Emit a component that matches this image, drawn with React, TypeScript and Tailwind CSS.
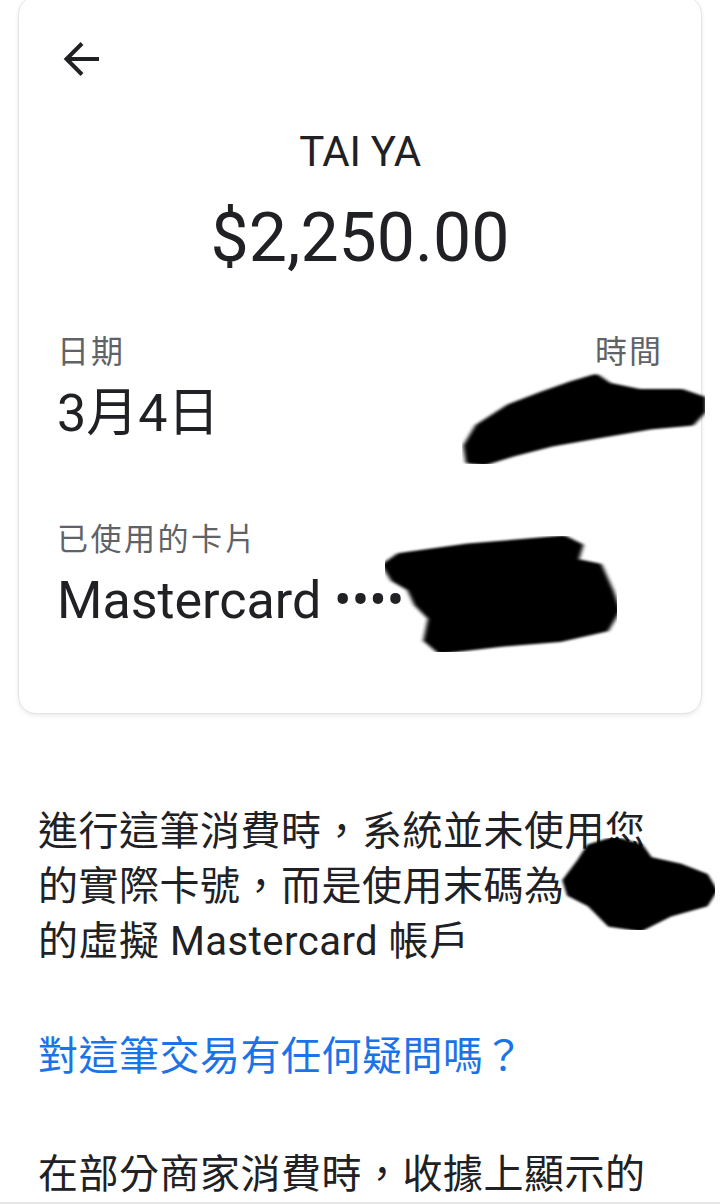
const font = { fontFamily: "Roboto, 'Noto Sans CJK TC', sans-serif" }

function BackArrow() {
  return (
    <svg width="40" height="36" viewBox="0 0 40 36" fill="none" stroke="#202124" strokeWidth="4">
      <path d="M4 17 H37" />
      <path d="M20 1.5 L4.5 17 L20 32.5" strokeLinejoin="miter" />
    </svg>
  )
}

// black scribbles that hide private numbers
function Redaction({ className, points }: { className: string; points: string }) {
  return (
    <svg className={className} viewBox="0 0 100 100" preserveAspectRatio="none">
      <defs>
        <filter id="soft" x="-10%" y="-10%" width="120%" height="120%">
          <feGaussianBlur stdDeviation="0.9" />
        </filter>
      </defs>
      <polygon points={points} fill="#000" stroke="#000" strokeWidth="3" strokeLinejoin="round" filter="url(#soft)" />
    </svg>
  )
}

export default function App() {
  return (
    <div className="relative w-[720px] h-[1204px] overflow-hidden bg-white text-[#202124]" style={font}>
      {/* Transaction card */}
      <div className="mx-[18px] -mt-[4px] rounded-[18px] border border-[#e4e4e4] bg-white shadow-[0_2px_4px_rgba(0,0,0,0.08)] px-[38px] pt-[45px] pb-[82px]">
        <button className="block h-[36px] ml-[5px]">
          <BackArrow />
        </button>

        <div className="mt-[50px] text-center text-[42px] leading-[48px] tracking-[-0.3px]">TAI YA</div>
        <div className="mt-[24px] text-center text-[68px] leading-[76px]">$2,250.00</div>

        <div className="mt-[56px] flex justify-between text-[32px] leading-[40px] tracking-[2px] text-[#5f6368]">
          <span>日期</span>
          <span>時間</span>
        </div>
        <div className="mt-[12px] text-[52px] leading-[60px]">3月4日</div>

        <div className="mt-[76px] text-[31px] leading-[40px] tracking-[2.5px] text-[#5f6368]">已使用的卡片</div>
        <div className="mt-[11px] text-[52px] leading-[60px]">Mastercard ••••</div>
      </div>

      {/* Explanation text */}
      <div className="px-[38px] pt-[90px]">
        <p className="text-[40px] leading-[55px] tracking-[0.5px]">
          進行這筆消費時，系統並未使用您的實際卡號，而是使用末碼為 0000 的虛擬 Mastercard 帳戶
        </p>
        <p className="mt-[60px] text-[40px] leading-[55px] tracking-[0.5px] text-[#1a73e8]">對這筆交易有任何疑問嗎？</p>
        <p className="mt-[63px] text-[40px] leading-[55px] tracking-[0.5px]">在部分商家消費時，收據上顯示的</p>
      </div>

      <Redaction
        className="absolute left-[462px] top-[372px] w-[243px] h-[92px]"
        points="3,98 2,80 7,58 20,36 34,22 46,11 55,4 60,13 73,20 90,20 99,28 99,43 94,57 77,61 57,70 36,80 20,91 9,100"
      />
      <Redaction
        className="absolute left-[385px] top-[536px] w-[232px] h-[116px]"
        points="0,25 6.5,16 36,8 77,1 84,8 82,21 92,25 97,47 100,64 95,81 75,90 50,94 24,100 18,90 20,71 14,59 11,46 4,38"
      />
      <Redaction
        className="absolute left-[560px] top-[838px] w-[155px] h-[92px]"
        points="12,26 19,8 35,0 52,8 58,22 77,29 94,40 100,57 94,73 71,84 52,100 32,95 19,73 6,62 3,46"
      />

      <div className="absolute bottom-0 left-0 w-full h-[2px] bg-[#e6e6e6]" />
    </div>
  )
}
